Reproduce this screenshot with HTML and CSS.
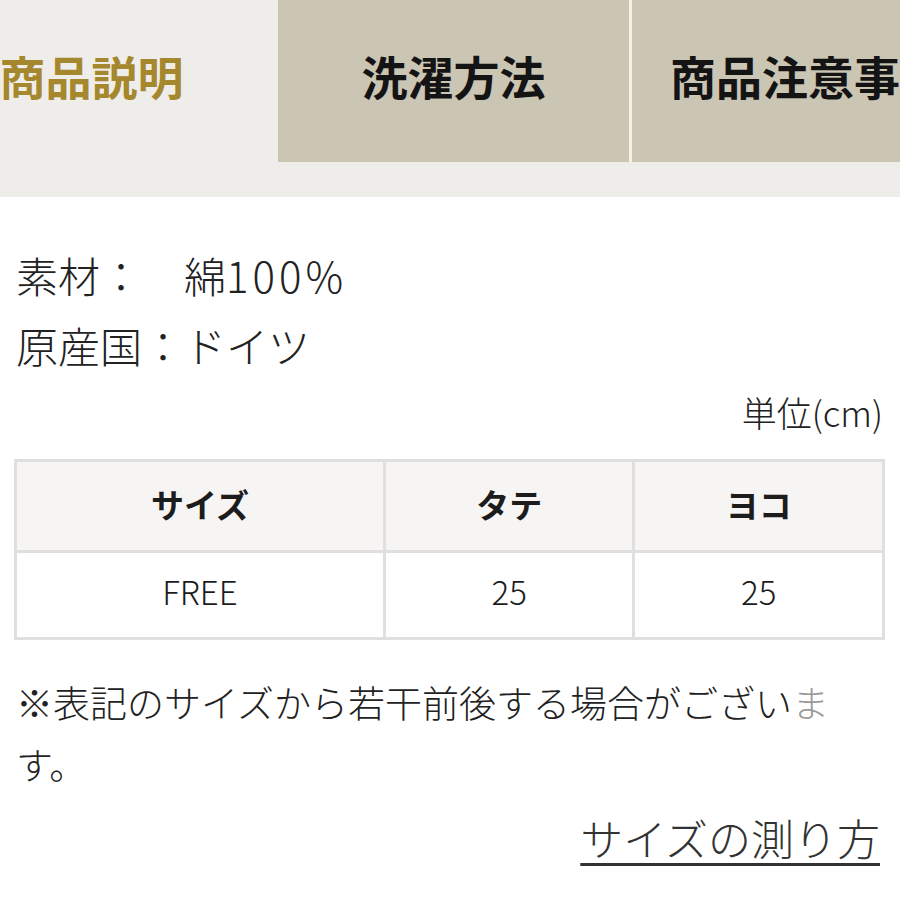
FILE: index.html
```html
<!DOCTYPE html>
<html lang="ja">
<head>
<meta charset="utf-8">
<title>商品説明</title>
<link rel="stylesheet" href="styles.css">
</head>
<body>
<div class="page">
  <div class="tab-strip">
    <div class="tabs">
      <div class="tab tab-active">商品説明</div>
      <div class="tab">洗濯方法</div>
      <div class="tab tab-sep">商品注意事項</div>
    </div>
  </div>
  <div class="content">
    <div class="spec">
      <div class="spec-line">素材：　綿<span class="num">100%</span></div>
      <div class="spec-line">原産国：ドイツ</div>
    </div>
    <div class="unit">単位(cm)</div>
    <table class="size-table">
      <thead>
        <tr><th class="col-size">サイズ</th><th class="col-num">タテ</th><th class="col-num">ヨコ</th></tr>
      </thead>
      <tbody>
        <tr><td>FREE</td><td>25</td><td>25</td></tr>
      </tbody>
    </table>
    <p class="note">※表記のサイズから若干前後する場合がござい<span class="fade">ま</span>す。</p>
    <div class="link-row"><a class="measure-link" href="#">サイズの測り方</a></div>
  </div>
</div>
</body>
</html>
```
FILE: styles.css
```css
html, body {
  margin: 0;
  padding: 0;
  background: #ffffff;
}
body {
  width: 900px;
  height: 900px;
  overflow: hidden;
  font-family: "Noto Sans CJK JP", "Noto Sans", sans-serif;
  font-weight: 300;
  color: #222222;
}
.page {
  width: 900px;
}
.tab-strip {
  background: #efedea;
  padding-bottom: 35px;
  overflow: hidden;
}
.tabs {
  display: flex;
  margin-left: -73px;
  height: 162px;
}
.tab {
  flex: 0 0 351px;
  display: flex;
  align-items: center;
  justify-content: center;
  background: #cbc5b4;
  font-size: 46px;
  font-weight: 700;
  color: #141414;
  white-space: nowrap;
  overflow: hidden;
  box-sizing: border-box;
  padding-bottom: 12px;
}
.tab-active {
  background: #efedea;
  color: #a5872e;
  padding-right: 22px;
}
.tab-sep {
  border-left: 3px solid #f4f0e4;
  justify-content: flex-start;
  padding-left: 38px;
}
.content {
  padding: 0 15px 0 14px;
}
.spec {
  margin-top: 43px;
  padding-left: 2px;
}
.spec-line {
  font-size: 42px;
  line-height: 70px;
  color: #222222;
}
.num {
  letter-spacing: 4px;
}
.unit {
  margin-top: 10px;
  text-align: right;
  font-size: 35px;
  line-height: 44px;
  padding-right: 2px;
}
.size-table {
  margin-top: 25px;
  width: 871px;
  border-collapse: collapse;
  table-layout: fixed;
}
.size-table th,
.size-table td {
  border: 3px solid #dfdfdf;
  text-align: center;
  padding: 0;
  font-size: 33px;
  color: #1c1c1c;
}
.size-table th {
  height: 83px;
  background: #f6f5f3;
  font-weight: 700;
  padding-bottom: 5px;
}
.size-table td {
  height: 76px;
  padding-bottom: 8px;
  font-weight: 300;
  background: #ffffff;
}
.col-size {
  width: 42.6%;
}
.col-num {
  width: 28.7%;
}
.note {
  margin: 31px 0 0 2px;
  width: 820px;
  font-size: 37px;
  line-height: 62px;
  color: #222222;
}
.fade {
  color: #9a9a9a;
}
.link-row {
  margin-top: 14px;
  text-align: right;
  line-height: 56px;
  padding-right: 5px;
}
.measure-link {
  font-size: 43px;
  font-weight: 300;
  color: #333333;
  text-decoration: underline;
  text-decoration-thickness: 3px;
  text-underline-offset: 7px;
}
```
